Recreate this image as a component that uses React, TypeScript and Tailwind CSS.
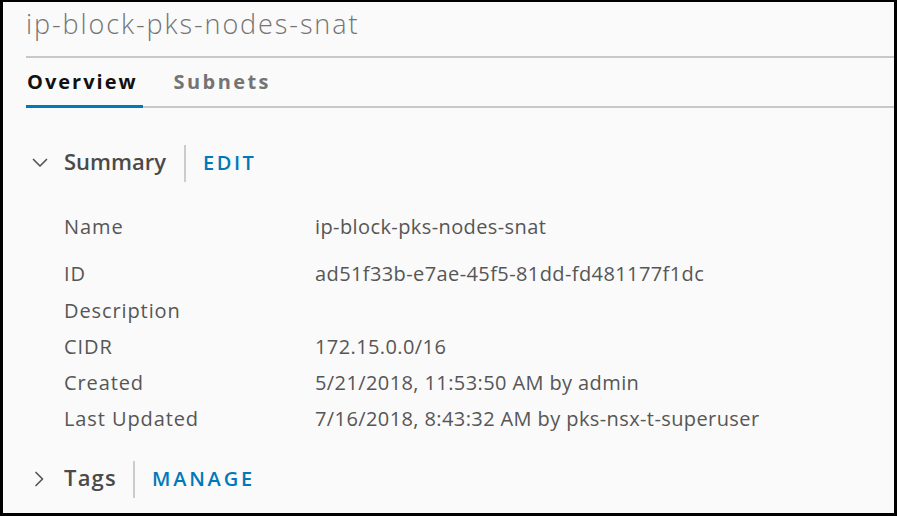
const rows = [
  { label: 'Name', value: 'ip-block-pks-nodes-snat', h: 'h-[47px]' },
  { label: 'ID', value: 'ad51f33b-e7ae-45f5-81dd-fd481177f1dc', h: 'h-[37px]' },
  { label: 'Description', value: '', h: 'h-[36px]' },
  { label: 'CIDR', value: '172.15.0.0/16', h: 'h-[36px]' },
  { label: 'Created', value: '5/21/2018, 11:53:50 AM by admin', h: 'h-[36px]' },
  { label: 'Last Updated', value: '7/16/2018, 8:43:32 AM by pks-nsx-t-superuser', h: 'h-[36px]' },
];

function Caret({ open }: { open: boolean }) {
  return (
    <svg width="16" height="16" viewBox="0 0 16 16" fill="none" stroke="#565656" strokeWidth="1.7" strokeLinecap="round" strokeLinejoin="round">
      {open ? <polyline points="1.5,4.5 8,11 14.5,4.5" /> : <polyline points="5,1.5 11.5,8 5,14.5" />}
    </svg>
  );
}

export default function App() {
  return (
    <div
      className="w-[897px] h-[516px] bg-[#fafafa] border-black border-t-2 border-l-[3px] border-r-[3px] border-b-[3px] overflow-hidden text-[#565656]"
      style={{ fontFamily: '"Open Sans", "Liberation Sans", sans-serif' }}>
      <div className="pl-[23px]">
        {/* Title */}
        <div className="h-[56px] flex items-center border-b-2 border-[#c8c8c8]">
          <h1 className="text-[27px] font-light text-[#747474] -mt-[10px] tracking-[1.9px]">ip-block-pks-nodes-snat</h1>
        </div>

        {/* Tabs */}
        <div className="h-[50px] flex items-end border-b-2 border-[#c8c8c8]">
          <div className="flex gap-[36px]">
            <div className="relative pb-[11px] pl-[1px]">
              <span className="text-[20px] leading-[27px] font-bold text-[#111] tracking-[2px]">Overview</span>
              <div className="absolute left-0 right-[-5px] bottom-[-2px] h-[3px] bg-[#0079b8]" />
            </div>
            <div className="pb-[11px]">
              <span className="text-[20px] leading-[27px] font-bold text-[#747474] tracking-[2.4px]">Subnets</span>
            </div>
          </div>
        </div>

        {/* Summary header */}
        <div className="flex items-center mt-[36px] h-[38px]">
          <div className="ml-[6px]"><Caret open /></div>
          <span className="ml-[16px] text-[22px] font-semibold text-[#4a4a4a] -mt-[3px]">Summary</span>
          <div className="ml-[18px] w-[2px] h-[37px] bg-[#cccccc]" />
          <span className="ml-[17px] text-[20px] font-semibold text-[#0079b8] tracking-[2.5px]">EDIT</span>
        </div>

        {/* Details */}
        <div className="mt-[32px] ml-[38px]">
          {rows.map(r => (
            <div key={r.label} className={`flex ${r.h}`}>
              <div className="w-[251px] text-[20px] tracking-[0.9px] text-[#565656] leading-[26px]">{r.label}</div>
              <div className="text-[20px] tracking-[0.4px] text-[#565656] leading-[26px]">{r.value}</div>
            </div>
          ))}
        </div>

        {/* Tags header */}
        <div className="flex items-center mt-[18px] h-[38px]">
          <div className="ml-[5px]"><Caret open={false} /></div>
          <span className="ml-[17px] text-[22px] font-semibold text-[#4a4a4a] tracking-[1.2px] -mt-[3px]">Tags</span>
          <div className="ml-[16px] w-[2px] h-[37px] bg-[#cccccc]" />
          <span className="ml-[17px] text-[20px] font-semibold text-[#0079b8] tracking-[2.8px]">MANAGE</span>
        </div>
      </div>
    </div>
  );
}
